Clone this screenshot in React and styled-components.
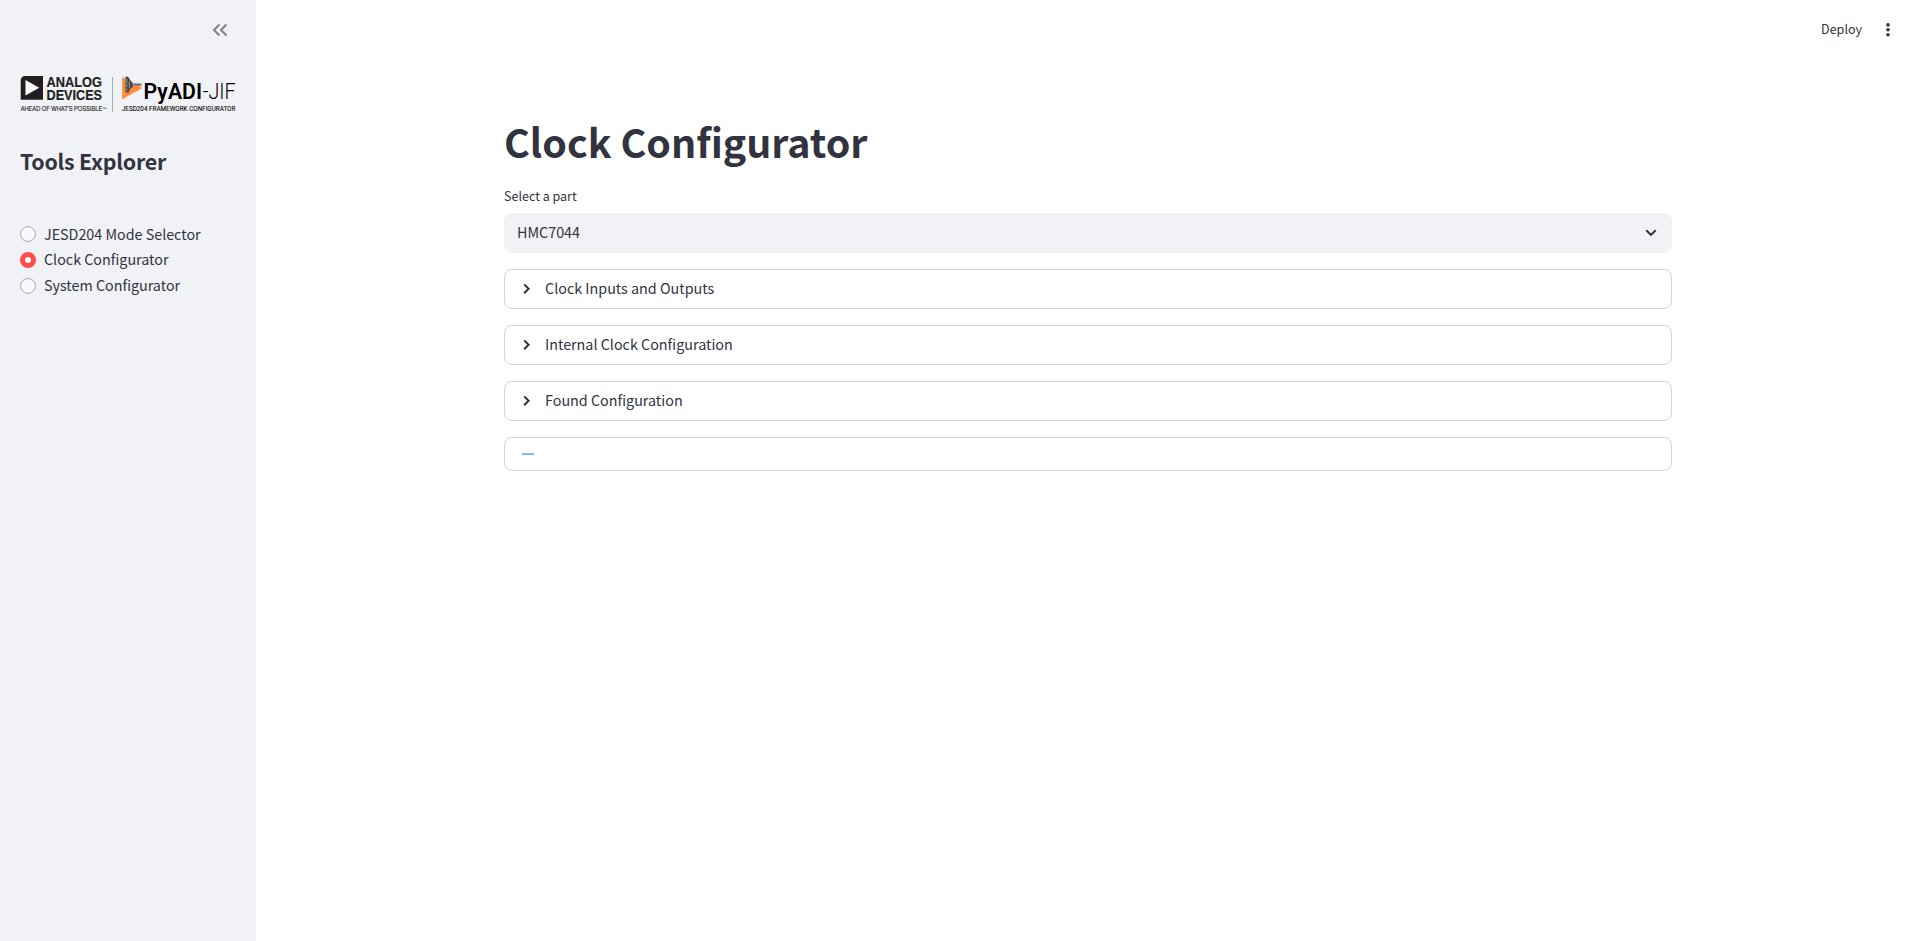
import React, { useState } from "react";
import styled, { createGlobalStyle } from "styled-components";

const ink = "#31333f";
const fontStack = `"Source Sans Pro", "Noto Sans CJK JP", "Noto Sans", sans-serif`;

const GlobalStyle = createGlobalStyle`
  *, *::before, *::after { box-sizing: border-box; }
  body { margin: 0; background: #fff; color: ${ink}; font-family: ${fontStack}; }
`;

const Page = styled.div`
  display: flex;
  height: 941px;
  overflow: hidden;
`;

const Sidebar = styled.aside`
  flex: 0 0 256px;
  background: #f0f2f6;
  padding: 0 20px;
`;

const CollapseRow = styled.div`
  display: flex;
  justify-content: flex-end;
  align-items: center;
  height: 60px;
  padding-right: 8px;
`;

const Logo = styled.svg`
  display: block;
  width: 216px;
  height: 40px;
  margin-top: 15px;
  overflow: visible;
`;

const SidebarTitle = styled.h2`
  margin: 30px 0 0;
  font-size: 21.4px;
  font-weight: 700;
  letter-spacing: -0.25px;
  line-height: 32px;
  white-space: nowrap;
`;

const RadioGroup = styled.div`
  display: flex;
  flex-direction: column;
  margin-top: 44px;
`;

const RadioRow = styled.label`
  display: flex;
  align-items: center;
  gap: 8px;
  height: 25.85px;
  font-size: 14.31px;
  line-height: 24px;
  cursor: pointer;
`;

const RadioText = styled.span`
  padding-bottom: 0.8px;
`;

const RadioInput = styled.input`
  appearance: none;
  flex: none;
  width: 16px;
  height: 16px;
  margin: 0;
  border-radius: 50%;
  border: ${(p) => (p.checked ? "5px solid #ff4b4b" : "1px solid #a9abb3")};
  background: ${(p) => (p.checked ? "#fff" : "#f9f9fb")};
`;

const Main = styled.main`
  flex: 1;
  display: flex;
  flex-direction: column;
`;

const Toolbar = styled.header`
  display: flex;
  justify-content: flex-end;
  align-items: center;
  gap: 19px;
  height: 60px;
  padding-right: 25px;
`;

const DeployButton = styled.button`
  border: 0;
  padding: 0 0 2px;
  background: none;
  color: ${ink};
  font: 400 12.53px/20px ${fontStack};
`;

const Content = styled.section`
  width: 1168px;
  margin: 54px auto 0;
`;

const Title = styled.h1`
  margin: 0;
  font-size: 39.4px;
  font-weight: 700;
  line-height: 53px;
`;

const FieldLabel = styled.div`
  margin: 18px 0 7px;
  font-size: 12.53px;
  line-height: 21px;
`;

const Select = styled.div`
  display: flex;
  justify-content: space-between;
  align-items: center;
  height: 40px;
  padding: 0 13px;
  border-radius: 8px;
  background: #f0f2f6;
  font-size: 14.33px;
  line-height: 24px;
`;

const RowText = styled.span`
  padding-bottom: 2px;
`;

const Panels = styled.div`
  display: flex;
  flex-direction: column;
  gap: 16px;
  margin-top: 16px;
`;

const Panel = styled.div`
  display: flex;
  align-items: center;
  gap: 13px;
  height: ${(p) => (p.$compact ? 34 : 40)}px;
  padding: 0 17px;
  border: 1px solid #d6d6d9;
  border-radius: 8px;
  font-size: 14.33px;
  line-height: 24px;
`;

const Dash = styled.span`
  width: 12px;
  height: 2px;
  background: #83bff7;
`;

function Brand() {
  return (
    <Logo viewBox="20 75 216 40" fill="#231f20" fontFamily='"Liberation Sans", sans-serif'>
      <path d="M25.5 76H43V99.7H20.7V80.8Q20.7 76 25.5 76Z" />
      <path d="M25.5 80L39.2 87.8L25.5 95.6Z" fill="#fff" />
      <g fontWeight="700" fontSize="14.8" stroke="#231f20" strokeWidth=".2">
        <text x="46.5" y="87" textLength="55.5" lengthAdjust="spacingAndGlyphs">ANALOG</text>
        <text x="46.5" y="99.7" textLength="55.5" lengthAdjust="spacingAndGlyphs">DEVICES</text>
      </g>
      <text x="20.7" y="111" fontSize="6.3" textLength="81.5" lengthAdjust="spacingAndGlyphs" stroke="#231f20" strokeWidth=".15">AHEAD OF WHAT'S POSSIBLE</text>
      <text x="102.4" y="109.5" fontSize="3.8" textLength="4.5" lengthAdjust="spacingAndGlyphs">™</text>
      <path d="M112.5 77V112" stroke="#96989d" strokeWidth=".8" />
      <path d="M122.2 77L142.3 88L122.2 99.3Z" fill="#ff8a38" />
      <path d="M125.5 76.5Q129 76 130 80L133 83.3V86.7L130 89L128.6 92.5H125.5Z" fill="#46464c" />
      <path d="M132.5 83.2H141.8V86.2H132.5Z" fill="#a89690" />
      <path d="M134 84.7H140" stroke="#57545a" strokeWidth=".9" />
      <path d="M126.7 79V83" stroke="#6b9bd0" strokeWidth="1.2" />
      <path d="M126.7 84.5V87" stroke="#75b84d" strokeWidth="1.2" />
      <path d="M126.7 88.5V91" stroke="#a279bb" strokeWidth="1.2" />
      <path d="M129.4 81.5V88" stroke="#b9b2a8" strokeWidth=".8" />
      <g fill="#000" fontFamily='Roboto, "Liberation Sans", sans-serif'>
        <text x="143.6" y="99.2" fontSize="22.6" fontWeight="600" textLength="58.4" lengthAdjust="spacingAndGlyphs">PyADI</text>
        <text x="202.8" y="99.2" fontSize="22.6" fontWeight="300" textLength="32.8" lengthAdjust="spacingAndGlyphs">-JIF</text>
        <text x="121.8" y="111" fontSize="6.3" fontWeight="400" stroke="#000" strokeWidth=".08" textLength="113.6" lengthAdjust="spacingAndGlyphs">JESD204 FRAMEWORK CONFIGURATOR</text>
      </g>
    </Logo>
  );
}

const pages = ["JESD204 Mode Selector", "Clock Configurator", "System Configurator"];
const sections = ["Clock Inputs and Outputs", "Internal Clock Configuration", "Found Configuration"];

export default function App() {
  const [page, setPage] = useState(pages[1]);
  return (
    <>
      <GlobalStyle />
      <Page>
        <Sidebar>
          <CollapseRow>
            <svg width="16" height="14" viewBox="0 0 16 14" fill="none" stroke="#7e808a" strokeWidth="2">
              <path d="M7.5 1.5L2 7L7.5 12.5M14.5 1.5L9 7L14.5 12.5" />
            </svg>
          </CollapseRow>
          <Brand />
          <SidebarTitle>Tools Explorer</SidebarTitle>
          <RadioGroup>
            {pages.map((name) => (
              <RadioRow key={name}>
                <RadioInput type="radio" name="page" checked={page === name} onChange={() => setPage(name)} />
                <RadioText>{name}</RadioText>
              </RadioRow>
            ))}
          </RadioGroup>
        </Sidebar>
        <Main>
          <Toolbar>
            <DeployButton>Deploy</DeployButton>
            <svg width="14" height="14" viewBox="0 0 14 14" fill={ink}>
              <circle cx="7" cy="1.9" r="1.8" />
              <circle cx="7" cy="6.8" r="1.8" />
              <circle cx="7" cy="11.7" r="1.8" />
            </svg>
          </Toolbar>
          <Content>
            <Title>Clock Configurator</Title>
            <FieldLabel>Select a part</FieldLabel>
            <Select>
              <RowText>HMC7044</RowText>
              <svg width="16" height="16" viewBox="0 0 16 16" fill="none" stroke={ink} strokeWidth="2">
                <path d="M3.3 5.2L8 9.9L12.7 5.2" />
              </svg>
            </Select>
            <Panels>
              {sections.map((name) => (
                <Panel key={name}>
                  <svg width="10" height="12" viewBox="0 0 10 12" fill="none" stroke={ink} strokeWidth="2">
                    <path d="M2.2 1.4L6.6 5.8L2.2 10.2" />
                  </svg>
                  <RowText>{name}</RowText>
                </Panel>
              ))}
              <Panel $compact>
                <Dash />
              </Panel>
            </Panels>
          </Content>
        </Main>
      </Page>
    </>
  );
}
